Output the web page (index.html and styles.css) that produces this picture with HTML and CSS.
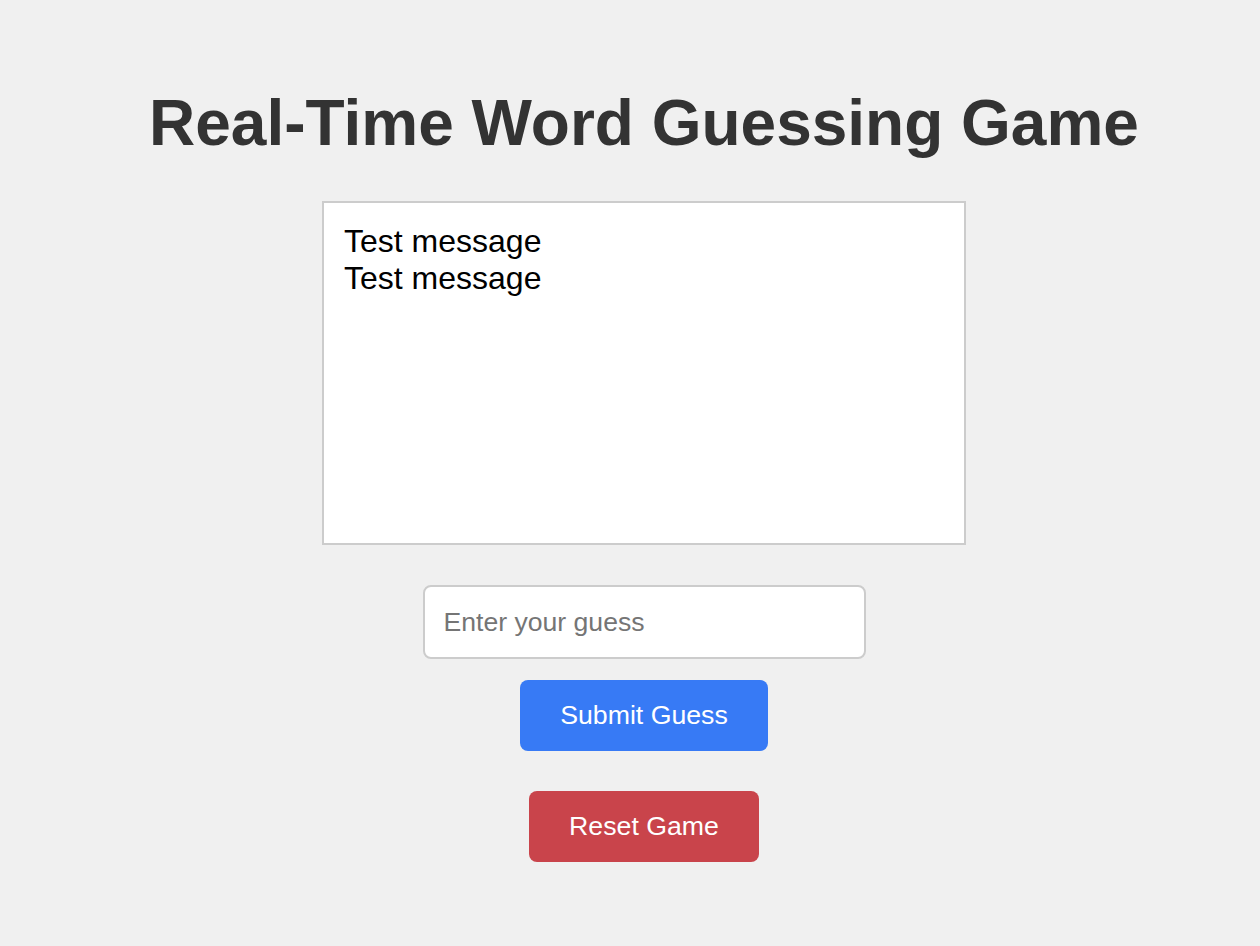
FILE: index.html
```html
<!DOCTYPE html>
<html lang="en">
<head>
<meta charset="utf-8">
<title>Real-Time Word Guessing Game</title>
<link rel="stylesheet" href="styles.css">
</head>
<body>
<main class="game">
  <h1 class="title">Real-Time Word Guessing Game</h1>
  <div class="messages">
    <div class="message">Test message</div>
    <div class="message">Test message</div>
  </div>
  <input class="guess-input" type="text" placeholder="Enter your guess">
  <button class="btn btn-submit">Submit Guess</button>
  <button class="btn btn-reset">Reset Game</button>
</main>
</body>
</html>
```

FILE: styles.css
```css
html, body {
  margin: 0;
  padding: 0;
  background: #f0f0f0;
}
body {
  font-family: "Liberation Sans", Arial, sans-serif;
  padding-left: 28px;
}
.game {
  display: flex;
  flex-direction: column;
  align-items: center;
  padding-top: 86px;
}
.title {
  margin: 0;
  font-size: 64px;
  line-height: 74px;
  font-weight: bold;
  color: #333333;
  white-space: nowrap;
}
.messages {
  box-sizing: border-box;
  width: 644px;
  height: 344px;
  margin-top: 41px;
  background: #ffffff;
  border: 2px solid #cccccc;
  padding: 20px;
  font-size: 32px;
  line-height: 37px;
  color: #000;
}
.guess-input {
  box-sizing: border-box;
  width: 443px;
  height: 74px;
  margin-top: 40px;
  padding: 0 19px;
  border: 2px solid #cccccc;
  border-radius: 8px;
  background: #fff;
  font-family: "Liberation Sans", Arial, sans-serif;
  font-size: 26.6px;
  color: #000;
  outline: none;
}
.guess-input::placeholder {
  color: #757575;
}
.btn {
  box-sizing: border-box;
  height: 71px;
  padding: 0 40.5px;
  border: none;
  border-radius: 8px;
  color: #ffffff;
  font-family: "Liberation Sans", Arial, sans-serif;
  font-size: 26.7px;
  cursor: pointer;
}
.btn-submit {
  margin-top: 21px;
  background: #377af5;
}
.btn-reset {
  margin-top: 40px;
  background: #c9444b;
}
```
